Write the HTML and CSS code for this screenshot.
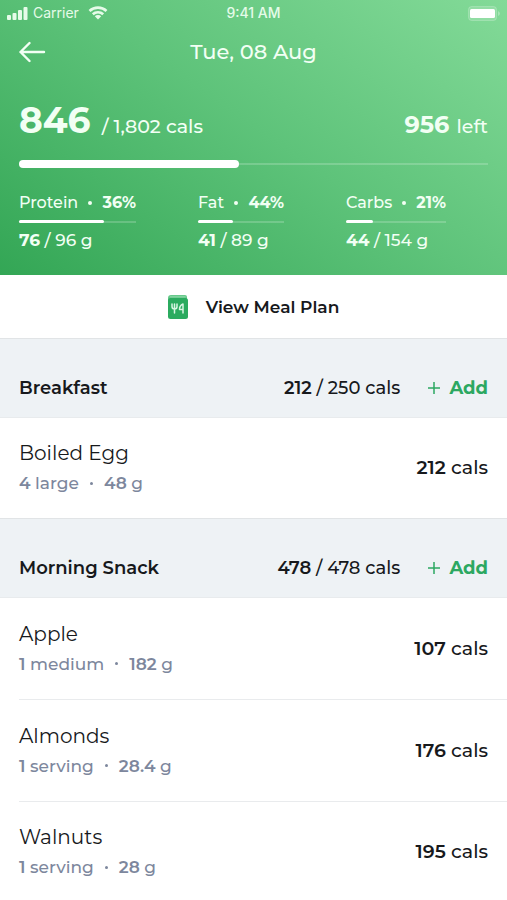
FILE: index.html
```html
<!DOCTYPE html>
<html lang="en">
<head>
<meta charset="utf-8">
<meta name="viewport" content="width=device-width, initial-scale=1">
<title>Food diary</title>
<link rel="stylesheet" href="styles.css">
</head>
<body>
<header class="summary">
  <div class="status">
    <div class="status-left">
      <svg width="22" height="14" viewBox="0 0 22 14" fill="currentColor" aria-hidden="true"><rect x="0" y="9" width="4" height="5" rx="1"/><rect x="5.500" y="7" width="4" height="7" rx="1"/><rect x="11" y="4" width="4" height="10" rx="1"/><rect x="16.500" y="1" width="4" height="13" rx="1"/></svg>
      <span>Carrier</span>
      <svg class="wifi" width="20" height="14" viewBox="0 0 20 14" aria-hidden="true"><path d="M1.500 5a12.400 12.400 0 0 1 17 0M4.800 8.300a7.600 7.600 0 0 1 10.400 0" fill="none" stroke="currentColor" stroke-width="2.600"/><path d="M10 13.500 6.800 10.200a4.600 4.600 0 0 1 6.400 0z" fill="currentColor"/></svg>
    </div>
    <time class="clock">9:41 AM</time>
    <svg class="battery" width="32" height="15" viewBox="0 0 32 15" aria-hidden="true"><rect x=".5" y=".5" width="28" height="14" rx="3" fill="#fff" fill-opacity=".15" stroke="#fff" stroke-opacity=".2"/><rect x="2" y="3" width="25" height="9" rx="1.500" fill="#fff"/><path d="M30 5v5q2-1 2-2.500T30 5z" fill="#fff" opacity=".3"/></svg>
  </div>
  <nav class="topbar">
    <button class="back" type="button" aria-label="Back"><svg width="27" height="22" viewBox="0 0 27 22" fill="none" stroke="currentColor" stroke-width="2.400" stroke-linecap="round" stroke-linejoin="round" aria-hidden="true"><path d="M25 11H1.500M10.500 2 1.500 11l9 9"/></svg></button>
    <h1 class="date">Tue, 08 Aug</h1>
  </nav>
  <div class="totals">
    <p class="eaten"><strong>846</strong> <span>/ 1,802 cals</span></p>
    <p class="left"><strong>956</strong> <span>left</span></p>
  </div>
  <div class="bar"><div class="fill" style="width:47%"></div></div>
  <div class="macros">
    <section class="macro">
      <p class="macro-name"><span>Protein</span><i class="dot"></i><b>36%</b></p>
      <div class="track"><div class="fill" style="width:73%"></div></div>
      <p class="macro-amount"><b>76</b> / 96 g</p>
    </section>
    <section class="macro">
      <p class="macro-name"><span>Fat</span><i class="dot"></i><b>44%</b></p>
      <div class="track"><div class="fill" style="width:41%"></div></div>
      <p class="macro-amount"><b>41</b> / 89 g</p>
    </section>
    <section class="macro">
      <p class="macro-name"><span>Carbs</span><i class="dot"></i><b>21%</b></p>
      <div class="track"><div class="fill" style="width:27%"></div></div>
      <p class="macro-amount"><b>44</b> / 154 g</p>
    </section>
  </div>
</header>
<main>
  <a class="plan" href="#">
    <svg width="20" height="24" viewBox="0 0 20 24" aria-hidden="true"><path d="M3 0h14a2 2 0 0 1 2 2v4H0V3a3 3 0 0 1 3-3z" fill="#67c98b"/><path d="M2 1.800h15.500" stroke="#8fd8aa" stroke-width="1"/><rect y="3" width="20" height="21" rx="2.500" fill="#2bab5f"/><path d="M4 9v2.500q0 2.500 2.500 2.500T9 11.500V9M6.500 9v9M15 18V9q-3.500 1.500-3.500 5.500H15" fill="none" stroke="#d8f5e2" stroke-width="1.500" stroke-linecap="round" stroke-linejoin="round"/></svg>
    <span>View Meal Plan</span>
  </a>
  <section>
    <div class="meal">
      <h2>Breakfast</h2>
      <p class="cals"><b>212</b> / 250 cals</p>
      <button class="add" type="button"><svg width="12" height="12" viewBox="0 0 12 12" stroke="currentColor" stroke-width="1.500" aria-hidden="true"><path d="M6 0v12M0 6h12"/></svg>Add</button>
    </div>
    <ul class="foods">
      <li class="food"><div><h3>Boiled Egg</h3><p class="portion"><span><b>4</b> large</span><i class="dot"></i><span><b>48</b> g</span></p></div><p class="cals"><b>212</b> cals</p></li>
    </ul>
  </section>
  <section>
    <div class="meal">
      <h2>Morning Snack</h2>
      <p class="cals"><b>478</b> / 478 cals</p>
      <button class="add" type="button"><svg width="12" height="12" viewBox="0 0 12 12" stroke="currentColor" stroke-width="1.500" aria-hidden="true"><path d="M6 0v12M0 6h12"/></svg>Add</button>
    </div>
    <ul class="foods">
      <li class="food"><div><h3>Apple</h3><p class="portion"><span><b>1</b> medium</span><i class="dot"></i><span><b>182</b> g</span></p></div><p class="cals"><b>107</b> cals</p></li>
      <li class="food"><div><h3>Almonds</h3><p class="portion"><span><b>1</b> serving</span><i class="dot"></i><span><b>28.4</b> g</span></p></div><p class="cals"><b>176</b> cals</p></li>
      <li class="food"><div><h3>Walnuts</h3><p class="portion"><span><b>1</b> serving</span><i class="dot"></i><span><b>28</b> g</span></p></div><p class="cals"><b>195</b> cals</p></li>
    </ul>
  </section>
</main>
</body>
</html>
```
FILE: styles.css
```css
* { box-sizing: border-box; margin: 0; padding: 0; }
body { font-family: Montserrat, Inter, sans-serif; font-size: 19px; font-weight: 500; line-height: 24px; color: #17191c; background: #fff; }
button { font: inherit; background: none; border: 0; cursor: pointer; }
svg { display: block; flex: none; }
b { font-weight: 600; }
.dot { width: 4px; height: 4px; border-radius: 50%; background: currentColor; }

.summary { color: #f2fff4; background: linear-gradient(35deg, #33a655 0%, #5ec37a 52%, #83da98 100%); padding-bottom: 25px; }
.status { display: grid; grid-template-columns: 1fr auto 1fr; align-items: center; height: 26px; padding: 0 7px; font-family: Inter, sans-serif; font-size: 14px; font-weight: 400; line-height: 26px; color: #e6fbe9; }
.status-left { display: flex; align-items: center; gap: 4px; }
.wifi { margin-left: 5px; }
.clock { font-weight: 500; }
.battery { justify-self: end; }
.topbar { display: grid; grid-template-columns: 1fr auto 1fr; align-items: center; height: 52px; padding: 0 19px; }
.back { justify-self: start; color: inherit; }
.date { font-size: 21px; font-weight: 500; }
.totals { display: flex; justify-content: space-between; align-items: baseline; margin-top: 18px; padding: 0 19px; line-height: 48px; }
.totals strong { font-weight: 700; }
.eaten strong { font-size: 36px; margin-right: 6px; }
.left strong { font-size: 24px; margin-right: 2px; }
.bar { display: flex; align-items: center; height: 8px; margin: 9px 19px 0; background: linear-gradient(#ffffff30, #ffffff30) center / 100% 2px no-repeat; }
.fill { height: 100%; border-radius: 4px; background: #fff; }
.macros { display: grid; grid-template-columns: 117px 86px 100px; gap: 62px; margin: 25px 19px 0; font-size: 16px; line-height: 20px; }
.macros b { font-weight: 700; }
.macro-name { display: flex; align-items: center; justify-content: space-between; }
.track { height: 3px; margin: 7px 0; background: linear-gradient(#ffffff30, #ffffff30) center / 100% 2px no-repeat; }
.macro-amount { font-size: 17px; }

.plan { display: flex; align-items: center; justify-content: center; gap: 18px; height: 63px; color: inherit; text-decoration: none; font-size: 17px; font-weight: 600; }
.meal { display: flex; align-items: center; min-height: 80px; padding: 20px 19px 0; background: #eef2f5; border-top: 1px solid #e1e4e6; border-bottom: 1px solid #e8ebed; font-size: 18px; }
.meal h2 { flex: 1; font-size: 18px; font-weight: 600; }
.add { display: flex; align-items: center; gap: 9px; margin-left: 28px; color: #2ca861; font-size: 18px; font-weight: 700; }
.foods { list-style: none; }
.food { display: flex; align-items: center; justify-content: space-between; min-height: 102px; margin-left: 19px; padding-right: 19px; border-bottom: 1px solid #e9ebed; }
.food:last-child { min-height: 100px; border-bottom: 0; }
.food h3 { font-size: 20px; font-weight: 400; }
.portion { display: flex; align-items: center; gap: 11px; margin-top: 6px; color: #7d879d; font-size: 17px; }
.portion .dot { width: 3px; height: 3px; }
```
